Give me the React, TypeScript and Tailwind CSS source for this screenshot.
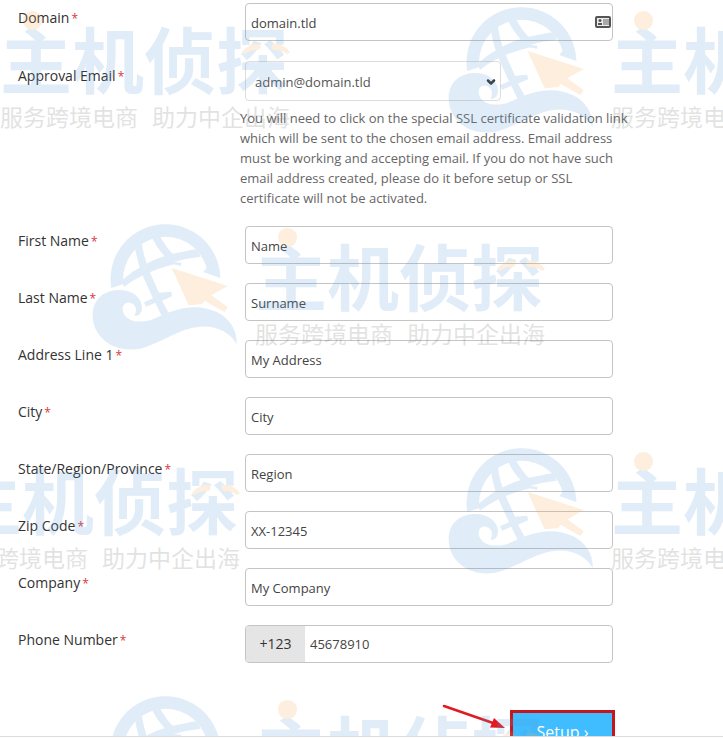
import { ChevronDown } from "lucide-react"

type Field = { id: string; label: string; value: string }

const fields: Field[] = [
    { id: "first-name", label: "First Name", value: "Name" },
    { id: "last-name", label: "Last Name", value: "Surname" },
    { id: "address", label: "Address Line 1", value: "My Address" },
    { id: "city", label: "City", value: "City" },
    { id: "region", label: "State/Region/Province", value: "Region" },
    { id: "zip", label: "Zip Code", value: "XX-12345" },
    { id: "company", label: "Company", value: "My Company" },
]

const FieldLabel = ({ id, text }: { id: string; text: string }) => (
    <label htmlFor={id} className="w-[227px] shrink-0 pt-[5px] text-sm leading-5 text-[#333]">
        {text}<span className="ml-0.5 text-xs text-[#d9363e]">*</span>
    </label>
)

const inputClass = "h-[38px] w-full rounded-[4px] border border-[#c4c4c4] bg-white px-[5px] pt-0.5 text-[13px] text-[#444] outline-none"

const Watermark = ({ className }: { className: string }) => (
    <div className={`absolute flex w-[453px] gap-[17px] ${className}`}>
        <svg viewBox="36 26 438 381" className="h-[127px] w-[146px] shrink-0" fill="none">
            <g fill="#5b9bd5">
                <path d="M94 218 A164 164 0 0 1 257 27 A164 164 0 0 1 421 188 L370 170 L380 158 A128 128 0 0 0 257 64 A128 128 0 0 0 130 206 Z" />
                <path d="M124 196 Q190 140 262 120 Q320 106 352 102 L362 124 Q320 128 282 140 L304 142 L303 152 Q290 146 276 148 Q190 170 132 214 Z" />
                <path d="M163 82 L184 76 Q192 130 208 168 L237 232 L274 229 L276 243 L246 256 L266 292 L245 301 L226 262 L198 274 L192 261 L219 249 L190 185 Q170 140 163 82 Z" />
                <path d="M214 62 L238 58 Q254 92 284 122 L268 136 Q232 104 214 62 Z" />
                <path d="M38 300 C38 250 75 222 122 224 C160 226 188 250 186 280 C184 296 172 304 163 300 C174 284 166 264 148 262 C132 260 124 276 130 292 C142 322 190 326 228 308 C290 278 350 262 410 290 C450 310 472 345 470 386 C450 350 410 330 360 334 C300 338 250 380 180 400 C100 414 38 366 38 300 Z" />
            </g>
            <path fill="#f7a54a" d="M275 158 L443 212 L394 240 L443 276 L433 290 L374 256 L366 266 L326 270 Z" />
        </svg>
        <div className="relative w-[290px] shrink-0 whitespace-nowrap font-['Noto_Sans_CJK_SC',sans-serif]">
            <p className="pt-2.5 text-[72px] leading-[80px] font-bold text-[#5b9bd5]">主机侦探</p>
            <p className="mt-[5px] flex justify-between text-[23px] leading-7 text-[#666]">
                <span>服务跨境电商</span>
                <span>助力中企出海</span>
            </p>
            <span className="absolute top-1 left-[23px] size-[19px] rounded-full bg-[#f7a54a]" />
            <svg viewBox="0 0 48 10" className="absolute top-[37px] left-[242px] h-2.5 w-12" fill="#f7a54a">
                <path d="M0 8Q7 -1 18 0Q20 6 14 6Q8 6 3 10Z" />
                <path d="M48 8Q41 -1 30 0Q28 6 34 6Q40 6 45 10Z" />
            </svg>
        </div>
    </div>
)

const App = () => {
    return (
        <div className="relative flex h-screen flex-col overflow-hidden bg-white pb-px font-['Open_Sans',sans-serif]">
            <main className="grow overflow-hidden border-b border-[#dcdcdc] px-[18px] pt-[3px]">
                <form className="max-w-[595px]">
                    <div className="flex">
                        <FieldLabel id="domain" text="Domain" />
                        <div className="relative grow">
                            <input id="domain" defaultValue="domain.tld" className={inputClass} />
                            <svg viewBox="0 0 16 12" className="absolute top-[13px] right-0.5 h-3 w-4" fill="none">
                                <rect x="1" y="1" width="14" height="10" rx="1" fill="#eee" stroke="#555" strokeWidth="2" />
                                <path d="M8 4h6M8 6h6M8 8h6" stroke="#666" />
                                <circle cx="5" cy="4.500" r="1.500" fill="#555" />
                                <path d="M3 9V7h4v2z" fill="#555" />
                            </svg>
                        </div>
                    </div>
                    <div className="mt-5 flex">
                        <FieldLabel id="email" text="Approval Email" />
                        <div className="relative w-[256px]">
                            <select id="email" className="h-10 w-full appearance-none rounded-[4px] border border-[#ddd] bg-white px-[9px] pt-1 text-[13px] text-[#555]">
                                <option>admin@domain.tld</option>
                            </select>
                            <ChevronDown className="pointer-events-none absolute top-[15px] right-1 size-3 text-[#333]" strokeWidth={5} />
                        </div>
                    </div>
                    <p className="mt-[7px] mb-[18px] ml-[222px] w-[390px] text-[13px] leading-5 text-[#666]">
                        You will need to click on the special SSL certificate validation link which will be sent to the chosen email address. Email address must be working and accepting email. If you do not have such email address created, please do it before setup or SSL certificate will not be activated.
                    </p>
                    <div className="grid gap-[19px]">
                        {fields.map((field) => (
                            <div key={field.id} className="flex">
                                <FieldLabel id={field.id} text={field.label} />
                                <input id={field.id} defaultValue={field.value} className={inputClass} />
                            </div>
                        ))}
                        <div className="flex">
                            <FieldLabel id="phone" text="Phone Number" />
                            <div className="flex h-[38px] grow overflow-hidden rounded-[4px] border border-[#c4c4c4]">
                                <span className="flex w-[59px] items-center justify-center bg-[#e5e5e5] text-sm text-[#333]">+123</span>
                                <input id="phone" defaultValue="45678910" className="min-w-0 grow px-[5px] pt-0.5 text-[13px] text-[#444] outline-none" />
                            </div>
                        </div>
                    </div>
                    <div className="mt-[47px] flex justify-end">
                        <button type="button" className="-mr-0.5 h-12 w-[105px] border-3 border-[#c4161c] bg-[#40bdff] pb-1 text-base text-white">Setup ›</button>
                    </div>
                </form>
            </main>

            {/* arrow pointing at the setup button */}
            <svg viewBox="0 0 64 26" className="absolute top-[704px] left-[442px] h-[26px] w-16" fill="none">
                <path d="M2 2L51 19" stroke="#e01b22" strokeWidth="2.5" strokeLinecap="round" />
                <path d="M52 14L63 24 48 23.500z" fill="#e01b22" />
            </svg>

            {/* watermark layer */}
            <div aria-hidden="true" className="pointer-events-none absolute inset-x-0 top-0 bottom-0.5 overflow-hidden opacity-[.18]">
                <Watermark className="top-[7px] left-[-163px]" />
                <Watermark className="top-[7px] left-[448px]" />
                <Watermark className="top-[224px] left-[92px]" />
                <Watermark className="top-[448px] left-[-213px]" />
                <Watermark className="top-[448px] left-[448px]" />
                <Watermark className="top-[696px] left-[92px]" />
            </div>
        </div>
    )
}

export default App
